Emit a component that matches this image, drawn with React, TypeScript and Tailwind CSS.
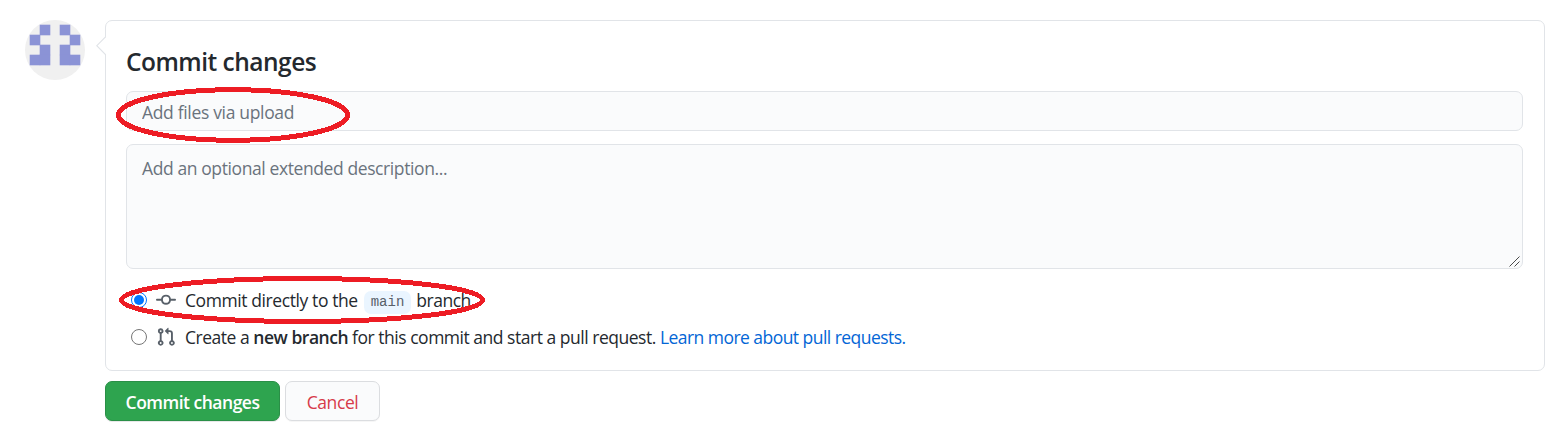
import { useState } from 'react';

type CommitTarget = 'direct' | 'branch';

const AVATAR_CELLS = [
  [40, 25],
  [60, 25],
  [30, 35],
  [70, 35],
  [40, 45],
  [60, 45],
  [30, 55],
  [40, 55],
  [60, 55],
  [70, 55],
];

function Avatar() {
  return (
    <svg width="60" height="60" viewBox="25 20 60 60" className="shrink-0">
      <circle cx="55" cy="50" r="30" fill="#f0f0f0" />
      {AVATAR_CELLS.map(([x, y]) => (
        <rect key={`${x}-${y}`} x={x - 0.3} y={y - 0.3} width="10.6" height="10.6" fill="#8b93d6" />
      ))}
    </svg>
  );
}

function CommitIcon() {
  return (
    <svg width="20" height="20" viewBox="0 0 16 16" fill="#586069">
      <path
        fillRule="evenodd"
        d="M10.5 7.75a2.5 2.5 0 11-5 0 2.5 2.5 0 015 0zm1.43.75a4.002 4.002 0 01-7.86 0H.75a.75.75 0 110-1.5h3.32a4.001 4.001 0 017.86 0h3.32a.75.75 0 110 1.5h-3.32z"
      />
    </svg>
  );
}

function PullRequestIcon() {
  return (
    <svg width="20" height="20" viewBox="0 0 16 16" fill="#586069">
      <path
        fillRule="evenodd"
        d="M7.177 3.073L9.573.677A.25.25 0 0110 .854v4.792a.25.25 0 01-.427.177L7.177 3.427a.25.25 0 010-.354zM3.75 2.5a.75.75 0 100 1.5.75.75 0 000-1.5zm-2.25.75a2.25 2.25 0 113 2.122v5.256a2.251 2.251 0 11-1.5 0V5.372A2.25 2.25 0 011.5 3.25zM11 2.5h-1V4h1a1 1 0 011 1v5.628a2.251 2.251 0 101.5 0V5A2.5 2.5 0 0011 2.5zm1 10.25a.75.75 0 111.5 0 .75.75 0 01-1.5 0zM3.75 12a.75.75 0 100 1.5.75.75 0 000-1.5z"
      />
    </svg>
  );
}

function Radio({ checked, onSelect }: { checked: boolean; onSelect: () => void }) {
  return (
    <button
      type="button"
      role="radio"
      aria-checked={checked}
      onClick={onSelect}
      className={`flex size-4 shrink-0 items-center justify-center rounded-full border bg-white ${
        checked ? 'border-[#0075ff]' : 'border-[#767676]'
      }`}
    >
      {checked && <span className="size-2.5 rounded-full bg-[#0075ff]" />}
    </button>
  );
}

export default function App() {
  const [target, setTarget] = useState<CommitTarget>('direct');

  return (
    <div className="relative h-[440px] w-[1568px] overflow-hidden bg-white pt-5 pl-[25px] font-['Open_Sans','Noto_Sans',sans-serif] text-[#24292e]">
      <div className="flex gap-5">
        <Avatar />

        <div className="w-[1440px]">
          <div className="relative h-[351px] rounded-[7px] border border-[#e1e4e8] pr-[21px] pl-5">
            {/* Caret pointing at the avatar */}
            <svg width="10" height="20" viewBox="0 0 10 20" className="absolute top-[15px] -left-[10px]">
              <path d="M10 0.5L0.8 9.7L10 19" fill="#fff" stroke="#e1e4e8" strokeWidth="1.2" />
            </svg>

            <h3 className="pt-[25px] text-[24.5px] leading-[32px] font-[550] tracking-[-0.5px] whitespace-nowrap">
              Commit changes
            </h3>

            <input
              type="text"
              placeholder="Add files via upload"
              className="mt-[13px] block h-10 w-full rounded-[7px] border border-[#e1e4e8] bg-[#fafbfc] px-[15px] pt-px text-[17.5px] tracking-[-0.33px] outline-none placeholder:text-[#6a737d]"
            />
            <div className="relative mt-[13px]">
              <textarea
                placeholder="Add an optional extended description..."
                className="block h-[125px] w-full resize-none rounded-[7px] border border-[#e1e4e8] bg-[#fafbfc] px-[15px] py-[10px] text-[17.5px] leading-[26px] tracking-[-0.4px] outline-none placeholder:text-[#6a737d]"
              />
              {/* Resize grip */}
              <svg
                width="12"
                height="12"
                viewBox="0 0 12 12"
                className="absolute right-[2px] bottom-[1px]"
                stroke="#4a4a4a"
              >
                <path d="M0.5 10.5L10.5 0.5M5.5 10.5L10.5 5.5" />
              </svg>
            </div>

            <div role="radiogroup" className="pt-[18px] pl-[5px] text-[17.5px] tracking-[-0.41px]">
              <div className="flex h-[26px] items-center whitespace-nowrap">
                <Radio checked={target === 'direct'} onSelect={() => setTarget('direct')} />
                <span className="mr-[9px] ml-[9px]">
                  <CommitIcon />
                </span>
                <span className="pt-px">Commit directly to the</span>
                <code className="mr-[5px] ml-[6px] mt-[4px] h-[23px] rounded-[7px] bg-[#eaf5ff] px-[7px] font-['Liberation_Mono',monospace] text-[14px] leading-[23px] tracking-normal text-[#586069]">
                  main
                </code>
                <span className="pt-px tracking-[-0.5px]">branch.</span>
              </div>
              <div className="mt-[11px] flex h-[26px] items-center whitespace-nowrap">
                <Radio checked={target === 'branch'} onSelect={() => setTarget('branch')} />
                <span className="mr-[9px] ml-[9px]">
                  <PullRequestIcon />
                </span>
                <span className="pt-px tracking-[-0.48px]">
                  Create a <b className="font-semibold">new branch</b> for this commit and start a pull request.{' '}
                  <a href="#" className="tracking-[-0.54px] text-[#0366d6]">
                    Learn more about pull requests.
                  </a>
                </span>
              </div>
            </div>
          </div>

          <div className="mt-[10px] flex gap-[5px]">
            <button
              type="button"
              className="h-10 w-[175px] rounded-[7px] border border-[#2a8f47] bg-[#2ea44f] pt-[2px] text-[17.5px] font-semibold tracking-[-0.5px] whitespace-nowrap text-white shadow-[0_1px_0_rgba(27,31,35,0.1)]"
            >
              Commit changes
            </button>
            <button
              type="button"
              className="h-10 w-[95px] rounded-[7px] border border-[#dbdde0] bg-[#fafbfc] pt-[2px] text-[17.5px] font-medium tracking-[-0.4px] text-[#d73a49] shadow-[0_1px_0_rgba(27,31,35,0.04)]"
            >
              Cancel
            </button>
          </div>
        </div>
      </div>

      {/* Hand-drawn highlights around the message and the chosen branch */}
      <svg
        width="1568"
        height="440"
        className="pointer-events-none absolute top-0 left-0"
        fill="none"
        stroke="#ed1c24"
        strokeWidth="5"
        shapeRendering="crispEdges"
      >
        <ellipse cx="233" cy="115" rx="114.5" ry="25.3" />
        <ellipse cx="302" cy="300" rx="180.5" ry="21.5" />
      </svg>
    </div>
  );
}
